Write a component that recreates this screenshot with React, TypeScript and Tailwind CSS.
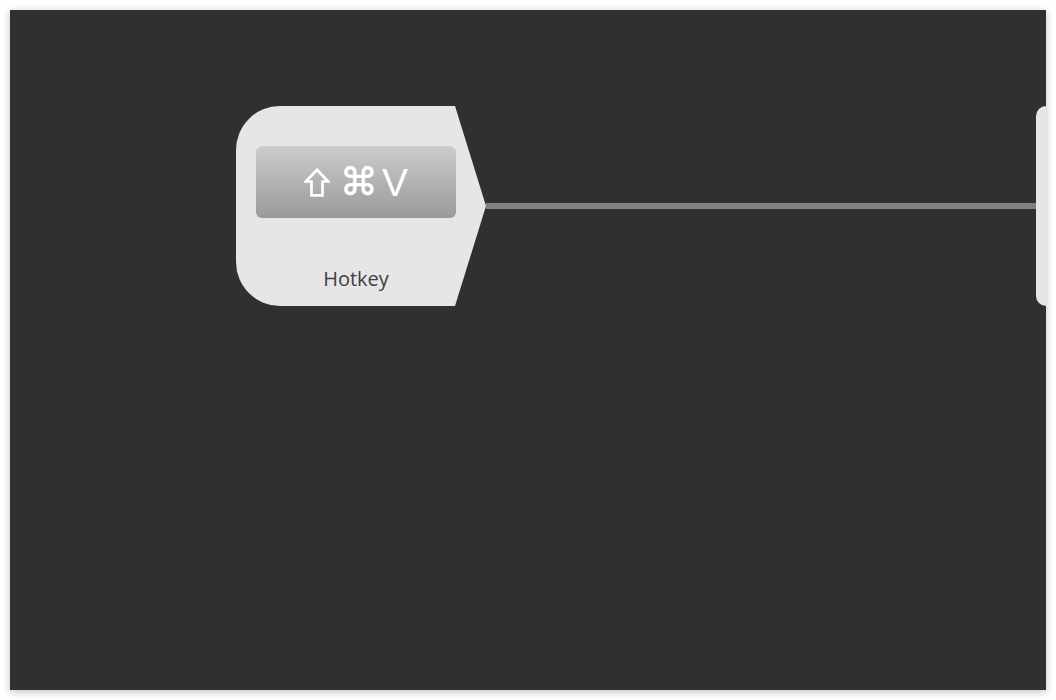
import React from 'react';

function ShiftIcon() {
  return (
    <svg width="26" height="29" viewBox="0 0 26 29" className="block">
      <polygon
        points="13,1.8 24.2,13.5 18.5,13.5 18.5,27.4 7.5,27.4 7.5,13.5 1.8,13.5"
        fill="none"
        stroke="white"
        strokeWidth="2.7"
        strokeLinejoin="miter"
      />
    </svg>
  );
}

function HotkeyNode() {
  return (
    <div className="absolute left-[226px] top-[96px] flex h-[200px]">
      <div className="relative z-10 flex w-[219px] flex-col items-start rounded-l-[44px] bg-[#e6e6e6] pl-[20px] pt-[40px]">
        <div className="flex h-[72px] w-[200px] items-center justify-center rounded-[6px] bg-gradient-to-b from-[#cccccc] to-[#9a9a9a]">
          <ShiftIcon />
          <span className="ml-[10px] text-[38px] leading-none text-white [font-family:'DejaVu_Sans',sans-serif] [-webkit-text-stroke:0.6px_white]">⌘</span>
          <span className="ml-[4px] text-[39px] leading-none text-white [font-family:'Liberation_Sans',sans-serif]">V</span>
        </div>
        <div className="mt-[51px] w-[200px] text-center text-[20px] leading-none text-[#404040] [font-family:'Open_Sans',sans-serif]">
          Hotkey
        </div>
      </div>
      {/* arrow tip */}
      <svg width="31" height="200" viewBox="0 0 31 200" className="block">
        <polygon points="0,0 31,100 0,200" fill="#e6e6e6" />
      </svg>
    </div>
  );
}

export default function App() {
  return (
    <div className="h-[700px] w-[1056px] bg-white p-[10px]">
      <div className="relative h-[680px] w-[1036px] overflow-hidden bg-[#303030] shadow-[0_2px_8px_rgba(0,0,0,0.25)]">
        {/* connector */}
        <div className="absolute left-[476px] top-[193px] h-[6px] w-[560px] bg-[#808080]" />
        <HotkeyNode />
        {/* next node, cut off at the edge */}
        <div className="absolute left-[1026px] top-[96px] h-[200px] w-[80px] rounded-l-[10px] bg-[#e6e6e6]" />
      </div>
    </div>
  );
}
